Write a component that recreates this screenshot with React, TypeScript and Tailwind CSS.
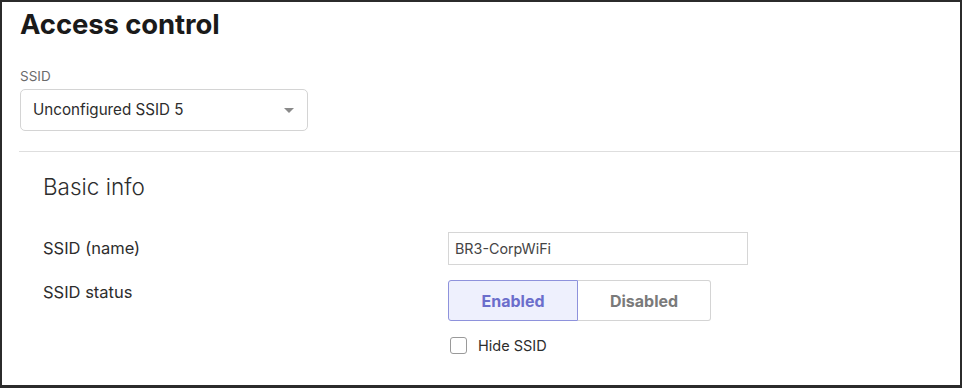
export default function App() {
  return (
    <div
      className="box-border h-[388px] w-[962px] overflow-hidden border-2 border-b-[3px] border-[#2b2b2b] bg-white text-[#1f1f1f]"
      style={{ fontFamily: "Inter, 'Noto Sans', sans-serif" }}
    >
      <div className="px-[18px] pt-[3px]">
        <h1 className="text-[27.5px] font-bold leading-[38px] tracking-[-0.1px] text-[#1a1a1a]">
          Access control
        </h1>

        <p className="mt-[25px] text-[13.5px] leading-[16px] text-[#6b6b6b]">
          SSID
        </p>

        <button
          type="button"
          className="mt-[5px] flex h-[42px] w-[288px] items-center justify-between rounded-[5px] border border-[#d4d4d4] pl-[12px] pr-[13px] text-[15.2px] text-[#2d2d2d]"
        >
          <span>Unconfigured SSID 5</span>
          <span className="h-0 w-0 border-x-[5px] border-t-[5px] border-x-transparent border-t-[#8a8a8a]" />
        </button>
      </div>

      <div className="ml-[17px] mt-[20px] border-t border-[#dedede] pl-[24px] pt-[20px]">
        <h2 className="text-[22.5px] font-light leading-[30px] text-[#2d2d2d]">
          Basic info
        </h2>

        <div className="mt-[30px] grid grid-cols-[405px_300px] items-center gap-y-[15px]">
          <span className="text-[16.5px] text-[#2d2d2d]">SSID (name)</span>
          <div className="flex h-[33px] items-center border border-[#d6d6d6] px-[6px] text-[14.3px] text-[#454545]">
            BR3-CorpWiFi
          </div>

          <span className="self-start text-[16.5px] leading-[24px] text-[#2d2d2d]">
            SSID status
          </span>
          <div>
            <div className="flex h-[41px] w-[263px] text-[16px] font-bold">
              <span className="flex w-[130px] items-center justify-center rounded-l-[3px] border border-[#8e92dc] bg-[#eef0fd] text-[#6b6ecc]">
                Enabled
              </span>
              <span className="flex flex-1 items-center justify-center rounded-r-[3px] border border-l-0 border-[#d4d4d4] text-[#7a7a7a]">
                Disabled
              </span>
            </div>
            <label className="mt-[14px] flex items-center gap-[11px] pl-[2px] text-[14.5px] text-[#2d2d2d]">
              <span className="h-[17px] w-[17px] rounded-[3px] border border-[#9a9a9a]" />
              Hide SSID
            </label>
          </div>
        </div>
      </div>
    </div>
  );
}
